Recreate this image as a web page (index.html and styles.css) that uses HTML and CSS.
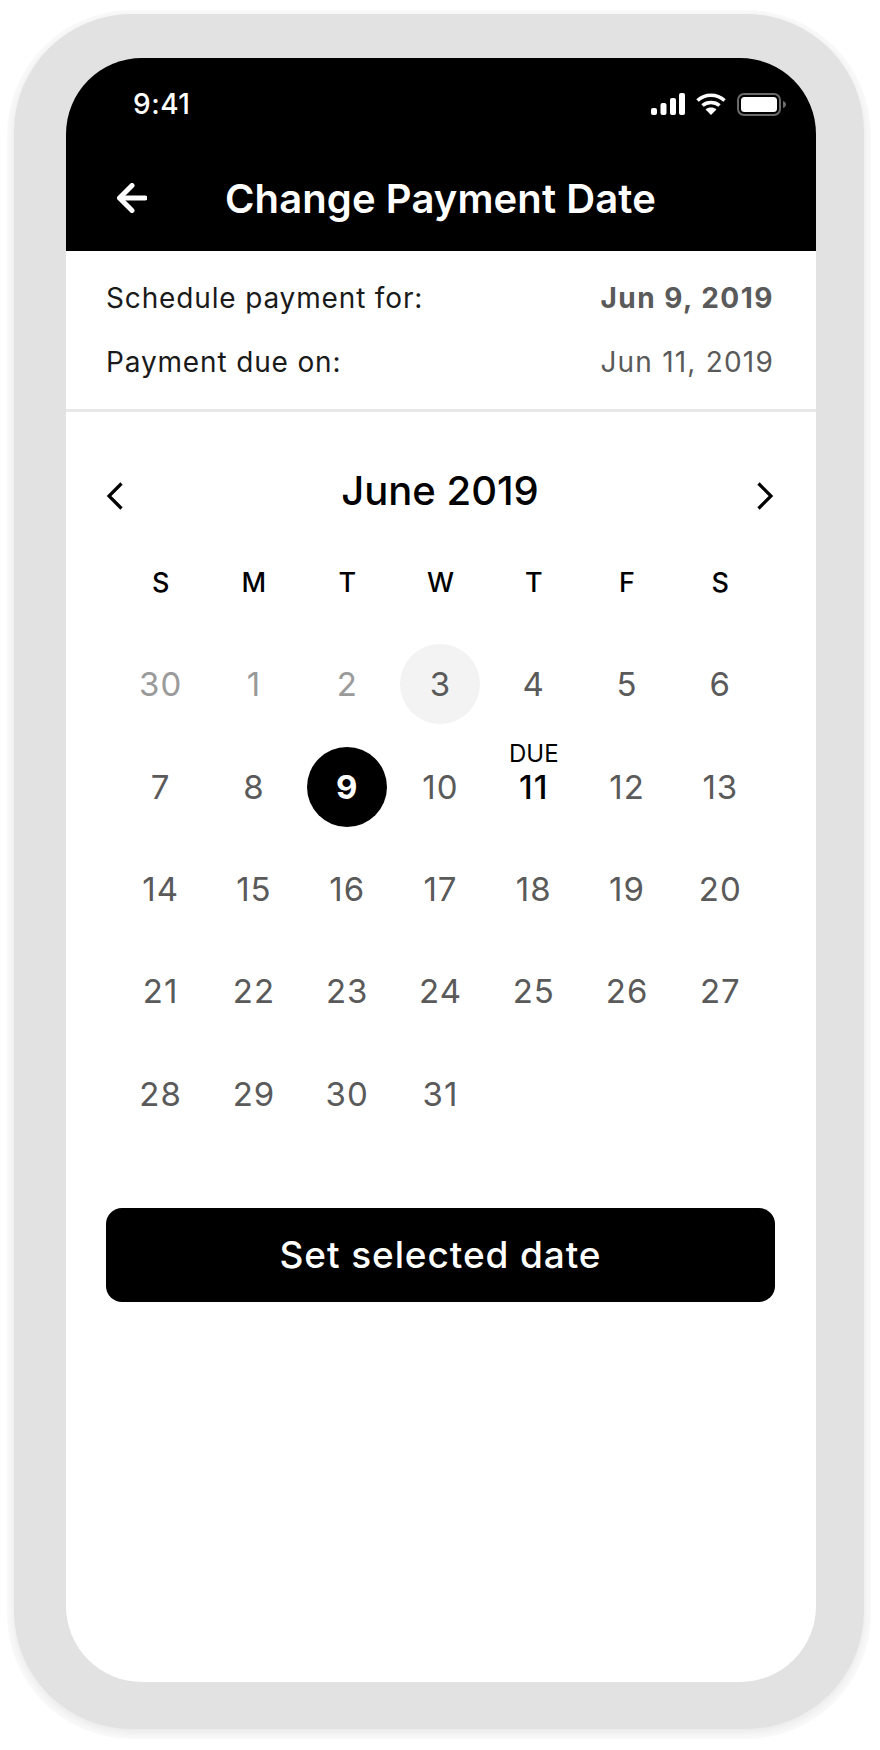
FILE: index.html
```html
<!DOCTYPE html>
<html lang="en">
<head>
    <meta charset="UTF-8">
    <meta name="viewport" content="width=device-width, initial-scale=1.0">
    <title>Change Payment Date</title>
    <link rel="stylesheet" href="styles.css">
</head>
<body>
    <div class="phone">
        <div class="screen">
            <header class="header">
                <div class="status">
                    <span class="time">9:41</span>
                    <div class="status-icons">
                        <svg width="34" height="22" viewBox="0 0 34 22" fill="#fff">
                            <rect x="0" y="15" width="6" height="7" rx="2"/>
                            <rect x="9.5" y="10" width="6" height="12" rx="2"/>
                            <rect x="19" y="5" width="6" height="17" rx="2"/>
                            <rect x="28" y="0" width="6" height="22" rx="2"/>
                        </svg>
                        <svg width="30" height="22" viewBox="0 0 30 22" fill="none" stroke="#fff" stroke-width="3.6">
                            <path d="M1.5 7.5C9 .5 21 .5 28.5 7.5"/>
                            <path d="M6.5 12.5C11 8.5 19 8.5 23.5 12.5"/>
                            <path d="M15 22L9.6 16.4C12.5 13.8 17.5 13.8 20.4 16.4Z" fill="#fff" stroke="none"/>
                        </svg>
                        <svg width="50" height="23" viewBox="0 0 50 23" fill="none">
                            <rect x="1" y="1" width="42" height="21" rx="6" stroke="#6a6a6a" stroke-width="2"/>
                            <rect x="4" y="4" width="36" height="15" rx="3.5" fill="#fff"/>
                            <path d="M46 8C48 8.6 49 10 49 11.5C49 13 48 14.4 46 15Z" fill="#6a6a6a"/>
                        </svg>
                    </div>
                </div>
                <div class="nav">
                    <svg class="back" width="30" height="30" viewBox="0 0 30 30" fill="none" stroke="#fff" stroke-width="5" stroke-linecap="round" stroke-linejoin="round">
                        <path d="M15 2.5L2.5 15L15 27.5"/>
                        <path d="M3 15H28"/>
                    </svg>
                    <h1>Change Payment Date</h1>
                </div>
            </header>

            <section class="summary">
                <div class="summary-row">
                    <span>Schedule payment for:</span>
                    <strong>Jun 9, 2019</strong>
                </div>
                <div class="summary-row">
                    <span>Payment due on:</span>
                    <em>Jun 11, 2019</em>
                </div>
            </section>

            <section class="calendar">
                <div class="month">
                    <svg class="chevron" width="18" height="28" viewBox="0 0 18 28" fill="none" stroke="#000" stroke-width="3.2">
                        <path d="M15.5 1.5L3 14L15.5 26.5"/>
                    </svg>
                    <h2>June 2019</h2>
                    <svg class="chevron" width="18" height="28" viewBox="0 0 18 28" fill="none" stroke="#000" stroke-width="3.2">
                        <path d="M2.5 1.5L15 14L2.5 26.5"/>
                    </svg>
                </div>

                <div class="weekdays">
                    <span>S</span><span>M</span><span>T</span><span>W</span><span>T</span><span>F</span><span>S</span>
                </div>

                <div class="days">
                    <div class="day past">30</div>
                    <div class="day past">1</div>
                    <div class="day past">2</div>
                    <div class="day today"><span>3</span></div>
                    <div class="day">4</div>
                    <div class="day">5</div>
                    <div class="day">6</div>

                    <div class="day">7</div>
                    <div class="day">8</div>
                    <div class="day selected"><span>9</span></div>
                    <div class="day">10</div>
                    <div class="day due"><small>DUE</small>11</div>
                    <div class="day">12</div>
                    <div class="day">13</div>

                    <div class="day">14</div>
                    <div class="day">15</div>
                    <div class="day">16</div>
                    <div class="day">17</div>
                    <div class="day">18</div>
                    <div class="day">19</div>
                    <div class="day">20</div>

                    <div class="day">21</div>
                    <div class="day">22</div>
                    <div class="day">23</div>
                    <div class="day">24</div>
                    <div class="day">25</div>
                    <div class="day">26</div>
                    <div class="day">27</div>

                    <div class="day">28</div>
                    <div class="day">29</div>
                    <div class="day">30</div>
                    <div class="day">31</div>
                </div>
            </section>

            <button class="set-date" type="button">Set selected date</button>
        </div>
    </div>
</body>
</html>
```

FILE: styles.css
```css
* {
    box-sizing: border-box;
}

body {
    margin: 0;
    background-color: #fff;
    font-family: Inter, "Noto Sans", sans-serif;
}

.phone {
    width: 850px;
    height: 1715px;
    margin: 14px;
    padding: 44px 48px 47px 52px;
    background-color: #e2e2e2;
    border-radius: 118px;
    box-shadow: 0 3px 7px 1px rgba(0, 0, 0, 0.06), 0 3px 0 7px #f9f9f9;
}

.screen {
    height: 1624px;
    background-color: #fff;
    border-radius: 76px;
    overflow: hidden;
}

.header {
    height: 193px;
    background-color: #000;
    color: #fff;
}

.status {
    height: 92px;
    padding: 0 29px 0 67px;
    display: flex;
    justify-content: space-between;
    align-items: center;
}

.time {
    font-size: 28px;
    font-weight: 500;
    letter-spacing: 0.5px;
}

.status-icons {
    display: flex;
    align-items: center;
    gap: 11px;
}

.nav {
    height: 101px;
    padding: 0 0 5px 51px;
    display: flex;
    align-items: center;
}

.back {
    flex: none;
}

.nav h1 {
    margin: 0 0 0 78px;
    font-size: 40px;
    font-weight: 600;
    letter-spacing: 0.1px;
}

.summary {
    height: 161px;
    padding: 15px 42px 0 40px;
    border-bottom: 3px solid #e8e8e8;
}

.summary-row {
    height: 64px;
    display: flex;
    justify-content: space-between;
    align-items: center;
    font-size: 28px;
    letter-spacing: 0.85px;
    color: #1a1a1a;
}

.summary-row strong {
    font-weight: 700;
    letter-spacing: 1.5px;
    color: #5a5a5a;
}

.summary-row em {
    font-style: normal;
    letter-spacing: 1.2px;
    color: #5a5a5a;
}

.calendar {
    padding: 0 40px;
}

.month {
    height: 96px;
    margin-top: 30px;
    padding-right: 2px;
    display: flex;
    justify-content: space-between;
    align-items: center;
}

.chevron {
    margin-top: 11px;
}

.month h2 {
    margin: 0;
    font-size: 40px;
    font-weight: 450;
    color: #000;
}

.weekdays,
.days {
    display: grid;
    grid-template-columns: repeat(7, 1fr);
    margin: 0 9px 0 8px;
    text-align: center;
}

.weekdays {
    height: 52px;
    margin-top: 18px;
    align-items: center;
    font-size: 27px;
    font-weight: 500;
    color: #000;
}

.days {
    grid-auto-rows: 102.4px;
    margin-top: 25px;
    font-size: 33px;
    letter-spacing: 1px;
    color: #5a5a5a;
}

.day {
    display: flex;
    align-items: center;
    justify-content: center;
    position: relative;
}

.day.past {
    color: #9a9a9a;
}

.day span {
    width: 80px;
    height: 80px;
    display: flex;
    align-items: center;
    justify-content: center;
    border-radius: 50%;
}

.day.today span {
    background-color: #f3f3f3;
}

.day.selected span {
    background-color: #000;
    color: #fff;
    font-weight: 700;
}

.day.due {
    color: #000;
    font-weight: 500;
}

.day.due small {
    position: absolute;
    top: 4px;
    left: 0;
    right: 0;
    font-size: 24px;
    font-weight: 400;
    letter-spacing: 0;
    text-align: center;
}

.set-date {
    display: block;
    width: 669px;
    height: 94px;
    margin: 63px 40px 0;
    border: none;
    border-radius: 16px;
    background-color: #000;
    color: #fff;
    font-family: inherit;
    font-size: 37px;
    font-weight: 500;
    letter-spacing: 0.9px;
}
```
